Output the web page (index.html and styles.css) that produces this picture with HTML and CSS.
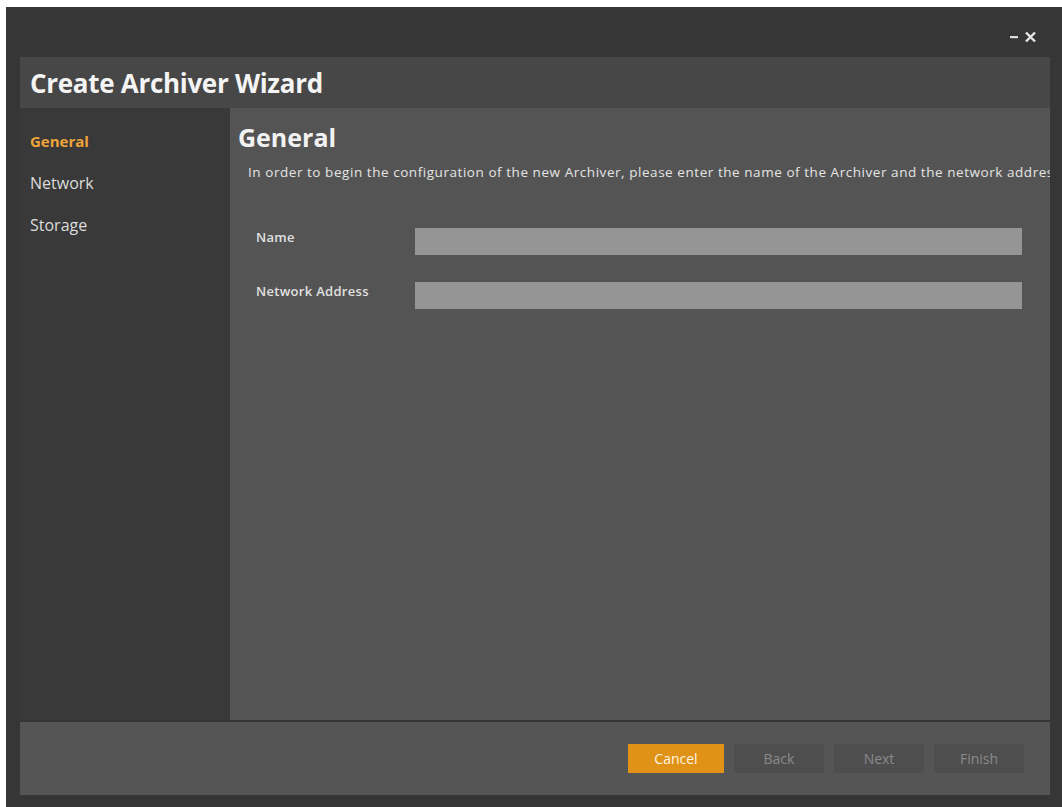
FILE: index.html
```html
<!DOCTYPE html>
<html lang="en">
<head>
  <meta charset="UTF-8">
  <title>Create Archiver Wizard</title>
  <link rel="stylesheet" href="styles.css">
</head>
<body>

<div class="window">
  <div class="titlebar">
    <svg class="win-btn" width="10" height="12" viewBox="0 0 10 12">
      <rect x="1" y="5" width="8" height="2.2" fill="#dcdcdc"/>
    </svg>
    <svg class="win-btn" width="13" height="12" viewBox="0 0 13 12">
      <path d="M2 1.5 L11 10.5 M11 1.5 L2 10.5" stroke="#e6e6e6" stroke-width="2.4"/>
    </svg>
  </div>

  <div class="header">
    <h1>Create Archiver Wizard</h1>
  </div>

  <div class="main">
    <ul class="steps">
      <li class="active">General</li>
      <li>Network</li>
      <li>Storage</li>
    </ul>

    <div class="page">
      <h2>General</h2>
      <p class="intro">In order to begin the configuration of the new Archiver, please enter the name of the Archiver and the network address of the server.</p>

      <div class="form">
        <div class="row">
          <label>Name</label>
          <div class="field"></div>
        </div>
        <div class="row">
          <label>Network Address</label>
          <div class="field"></div>
        </div>
      </div>
    </div>
  </div>

  <div class="footer">
    <button class="btn primary">Cancel</button>
    <button class="btn" disabled>Back</button>
    <button class="btn" disabled>Next</button>
    <button class="btn" disabled>Finish</button>
  </div>
</div>

</body>
</html>
```

FILE: styles.css
```css
body {
  margin: 0;
  background-color: #ffffff;
  font-family: 'Open Sans', 'Noto Sans', sans-serif;
  color: #e2e2e2;
}

.window {
  display: flex;
  flex-direction: column;
  margin: 7px 0 0 6px;
  width: 1056px;
  height: 800px;
  box-sizing: border-box;
  padding: 0 12px 12px 14px;
  background-color: #363636;
}

.titlebar {
  height: 50px;
  display: flex;
  justify-content: flex-end;
  align-items: center;
  gap: 5px;
  padding: 10px 13px 0 0;
  box-sizing: border-box;
}

.header {
  height: 51px;
  display: flex;
  align-items: center;
  padding-left: 10px;
  background-color: #474747;
}

.header h1 {
  margin: 0;
  font-size: 26px;
  font-weight: 700;
  color: #f4f4f4;
  letter-spacing: -0.3px;
}

.main {
  display: flex;
  flex: 1;
  min-height: 0;
}

.steps {
  width: 210px;
  box-sizing: border-box;
  margin: 0;
  padding: 12px 0 0 10px;
  list-style: none;
  background-color: #393939;
}

.steps li {
  height: 42px;
  line-height: 42px;
  font-size: 16px;
  color: #dcdcdc;
}

.steps li.active {
  font-size: 15px;
  font-weight: 700;
  color: #eea43a;
}

.page {
  flex: 1;
  overflow: hidden;
  padding: 14px 0 0 8px;
  background-color: #545454;
}

.page h2 {
  margin: 0;
  font-size: 25px;
  line-height: 30px;
  font-weight: 700;
  color: #f2f2f2;
}

/* the sentence runs past the panel edge and is cut off, as in the app */
.intro {
  margin: 11px 0 0 10px;
  font-size: 13.5px;
  letter-spacing: 0.55px;
  line-height: 18px;
  white-space: nowrap;
  color: #e4e4e4;
}

.form {
  display: flex;
  flex-direction: column;
  gap: 27px;
  margin: 47px 28px 0 18px;
}

.row {
  display: flex;
  align-items: flex-start;
}

.row label {
  width: 159px;
  font-size: 13px;
  font-weight: 600;
  letter-spacing: 0.3px;
  line-height: 18px;
  color: #e0e0e0;
}

.field {
  flex: 1;
  height: 27px;
  background-color: #959595;
}

.footer {
  height: 73px;
  margin-top: 2px;
  display: flex;
  justify-content: flex-end;
  align-items: center;
  gap: 10px;
  padding-right: 26px;
  background-color: #555555;
}

.btn {
  width: 90px;
  height: 29px;
  border: none;
  font-family: inherit;
  font-size: 14px;
  background-color: #4e4e4e;
  color: #8a8a8a;
}

.btn.primary {
  width: 96px;
  background-color: #df9216;
  color: #fff4e2;
}
```
